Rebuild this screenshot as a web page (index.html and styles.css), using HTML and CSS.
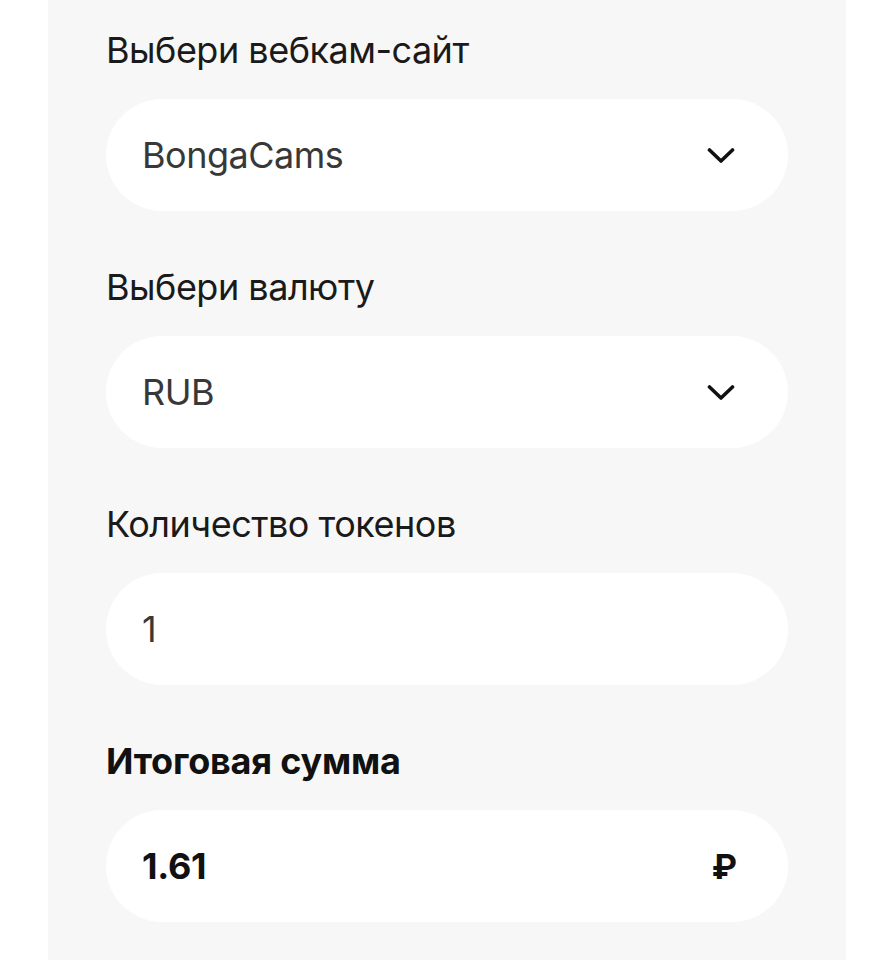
FILE: index.html
```html
<!DOCTYPE html>
<html lang="ru">
<head>
<meta charset="utf-8">
<link rel="stylesheet" href="styles.css">
</head>
<body>
<main class="panel">
  <div class="field">
    <div class="label">Выбери вебкам-сайт</div>
    <div class="input">
      <span class="value">BongaCams</span>
      <svg class="chevron" width="28" height="17" viewBox="0 0 28 17"><polyline points="2.5,3 14,14 25.5,3" fill="none" stroke="#111" stroke-width="3.6" stroke-linecap="round" stroke-linejoin="round"/></svg>
    </div>
  </div>
  <div class="field">
    <div class="label">Выбери валюту</div>
    <div class="input">
      <span class="value">RUB</span>
      <svg class="chevron" width="28" height="17" viewBox="0 0 28 17"><polyline points="2.5,3 14,14 25.5,3" fill="none" stroke="#111" stroke-width="3.6" stroke-linecap="round" stroke-linejoin="round"/></svg>
    </div>
  </div>
  <div class="field">
    <div class="label">Количество токенов</div>
    <div class="input">
      <span class="value">1</span>
    </div>
  </div>
  <div class="field">
    <div class="label label-bold">Итоговая сумма</div>
    <div class="input">
      <span class="value value-bold">1.61</span>
      <span class="currency">₽</span>
    </div>
  </div>
</main>
</body>
</html>
```
FILE: styles.css
```css
html, body {
  margin: 0;
  padding: 0;
  background: #ffffff;
}
body {
  font-family: Inter, "Noto Sans", sans-serif;
}
.panel {
  width: 798px;
  margin-left: 48px;
  min-height: 960px;
  box-sizing: border-box;
  background: #f7f7f7;
  padding: 30px 58px 0;
  display: flex;
  flex-direction: column;
  gap: 56px;
}
.field {
  display: flex;
  flex-direction: column;
  gap: 29px;
}
.label {
  font-size: 36px;
  line-height: 40px;
  height: 40px;
  color: #1a1a1a;
  letter-spacing: -0.5px;
  white-space: nowrap;
}
.label-bold {
  font-weight: 700;
  color: #111;
  letter-spacing: -0.2px;
}
.input {
  height: 112px;
  background: #ffffff;
  border-radius: 56px;
  display: flex;
  align-items: center;
  justify-content: space-between;
  padding: 0 53px 0 36px;
}
.value {
  font-size: 36px;
  color: #383838;
  letter-spacing: -0.5px;
}
.value-bold {
  font-weight: 700;
  color: #111;
  letter-spacing: -0.3px;
}
.chevron {
  display: block;
}
.currency {
  font-weight: 700;
  font-size: 34px;
  color: #111;
  margin-right: -2px;
}
```
